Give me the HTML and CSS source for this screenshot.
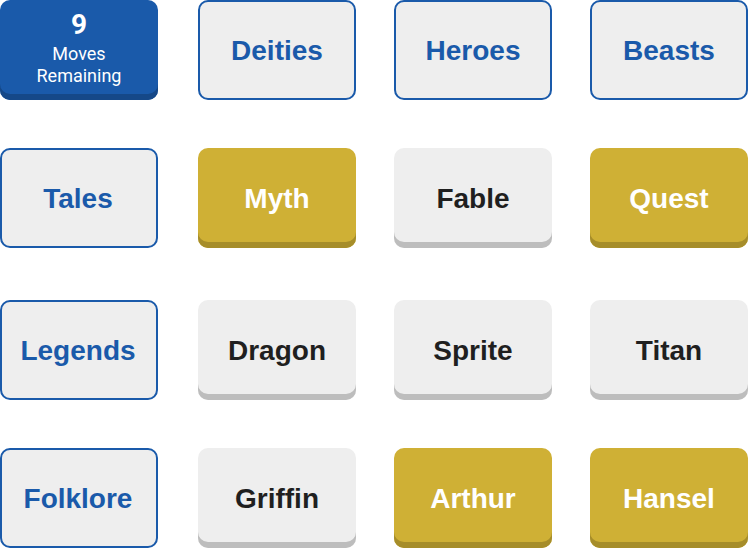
FILE: index.html
```html
<!DOCTYPE html>
<html lang="en">
<head>
<meta charset="utf-8">
<meta name="viewport" content="width=device-width, initial-scale=1">
<title>Word Grid</title>
<link rel="stylesheet" href="styles.css">
</head>
<body>
<main class="board">
  <div class="card moves"><strong class="moves-count">9</strong><span class="moves-label">Moves<br>Remaining</span></div>
  <div class="card heading">Deities</div>
  <div class="card heading">Heroes</div>
  <div class="card heading">Beasts</div>

  <div class="card heading row-start">Tales</div>
  <button type="button" class="card tile selected">Myth</button>
  <button type="button" class="card tile">Fable</button>
  <button type="button" class="card tile selected">Quest</button>

  <div class="card heading row-start">Legends</div>
  <button type="button" class="card tile">Dragon</button>
  <button type="button" class="card tile">Sprite</button>
  <button type="button" class="card tile">Titan</button>

  <div class="card heading row-start">Folklore</div>
  <button type="button" class="card tile">Griffin</button>
  <button type="button" class="card tile selected">Arthur</button>
  <button type="button" class="card tile selected">Hansel</button>
</main>
</body>
</html>
```
FILE: styles.css
```css
* {
  box-sizing: border-box;
}

body {
  margin: 0;
  background: #fff;
  font-family: "Liberation Sans", Arial, sans-serif;
}

.board {
  display: grid;
  grid-template-columns: 160fr 158fr 158fr 158fr;
  grid-template-rows: 100px 100px 104px 100px;
  gap: 48px 38px;
  align-items: end;
}

.card {
  display: flex;
  align-items: center;
  justify-content: center;
  min-width: 0;
  height: 100px;
  padding: 2px 0 0;
  border: 0;
  border-radius: 10px;
  font-family: inherit;
  font-size: 28px;
  font-weight: 700;
  line-height: 32px;
}

.heading {
  border: 2px solid #1a5aaa;
  background: #eee;
  color: #1a5aaa;
}

.moves,
.row-start {
  margin-right: 2px;
}

.row-start {
  padding-right: 2px;
}

.tile {
  background: #eee;
  box-shadow: inset 0 -6px #bdbdbd;
  color: #1f1f1f;
  cursor: pointer;
}

.selected {
  background: #cfb035;
  box-shadow: inset 0 -6px #a68d2a;
  color: #fff;
}

.moves {
  flex-direction: column;
  padding: 0 0 4px;
  background: #1a5aaa;
  box-shadow: inset 0 -6px #154888;
  color: #fff;
  font-family: Roboto, sans-serif;
  text-align: center;
}

.moves-count {
  font-weight: 700;
}

.moves-label {
  padding-top: 2px;
  font-size: 18px;
  font-weight: 400;
  line-height: 22px;
}
```
